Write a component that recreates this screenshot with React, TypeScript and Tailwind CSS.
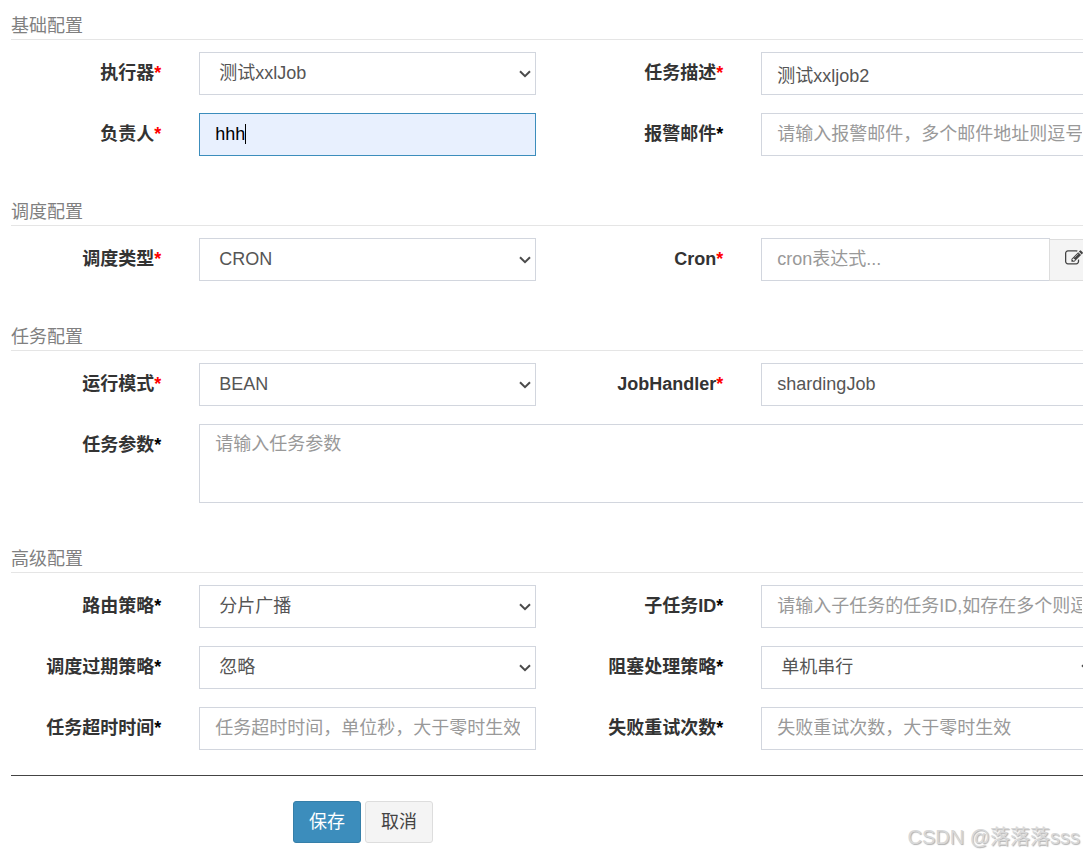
import React from 'react';

const control =
  'block h-[43px] w-full rounded-none border border-[#d2d6de] bg-white text-[18px] text-[#555] outline-none placeholder:text-[#999] placeholder:opacity-100';

function Section({ title, children }: { title: string; children: React.ReactNode }) {
  return (
    <section className="pb-[39px] last-of-type:pb-[25px]">
      <h2 className="-mr-[11px] h-[31px] border-b border-[#e5e5e5] pt-1 text-[18px] leading-[27px] text-[#808080]">{title}</h2>
      <div className="-mr-[45px] -ml-[18px] grid grid-cols-[minmax(0,1fr)_minmax(0,2fr)_minmax(0,1fr)_minmax(0,2fr)] gap-y-[18px] pt-3">
        {children}
      </div>
    </section>
  );
}

function Label({ id, text, required }: { id: string; text: string; required?: boolean }) {
  return (
    <label htmlFor={id} className="pt-[9px] pr-[19px] text-right text-[18px] leading-[25px] font-bold whitespace-nowrap text-[#333]">
      {text}
      <span className={required ? 'text-[#f00]' : 'text-black'}>*</span>
    </label>
  );
}

type FieldProps = { id: string; label: string; required?: boolean };

function SelectField({ id, label, required, option }: FieldProps & { option: string }) {
  return (
    <>
      <Label id={id} text={label} required={required} />
      <div className="px-[19px]">
        <div className="relative">
          <select id={id} className={`${control} appearance-none pr-6 pl-[19px]`}>
            <option>{option}</option>
          </select>
          <svg className="pointer-events-none absolute top-[18px] right-[5px] h-2 w-3" viewBox="0 0 12 8" fill="none" stroke="#4b4b4b" strokeWidth="2">
            <path d="M1 1.2 6 6.2 11 1.2" />
          </svg>
        </div>
      </div>
    </>
  );
}

function TextField({ id, label, required, value, placeholder }: FieldProps & { value?: string; placeholder?: string }) {
  return (
    <>
      <Label id={id} text={label} required={required} />
      <div className="px-[19px]">
        <input id={id} type="text" defaultValue={value} placeholder={placeholder} className={`${control} px-[15px]`} />
      </div>
    </>
  );
}

export default function App() {
  return (
    <main className="relative min-h-screen overflow-hidden bg-white px-[11px] pt-[9px] font-['Liberation_Sans','Noto_Sans_CJK_SC',sans-serif]">
      <form onSubmit={(e) => e.preventDefault()}>
        <Section title="基础配置">
          <SelectField id="group" label="执行器" required option="测试xxlJob" />
          <TextField id="desc" label="任务描述" required value="测试xxljob2" />
          <Label id="author" text="负责人" required />
          <div className="px-[19px]">
            <div className="relative">
              <input
                id="author"
                type="text"
                defaultValue="hhh"
                className="block h-[43px] w-full border border-[#3c8dbc] bg-[#e8f0fe] px-[15px] text-[18px] text-black outline-none"
              />
              <span className="pointer-events-none absolute top-[11px] left-[46px] h-5 w-px bg-black" />
            </div>
          </div>
          <TextField id="email" label="报警邮件" placeholder="请输入报警邮件，多个邮件地址则逗号分隔" />
        </Section>

        <Section title="调度配置">
          <SelectField id="schedule" label="调度类型" required option="CRON" />
          <Label id="cron" text="Cron" required />
          <div className="flex px-[19px]">
            <input id="cron" type="text" placeholder="cron表达式..." className={`${control} min-w-0 flex-1 px-[15px]`} />
            <button type="button" aria-label="Cron" className="mt-px -ml-px flex h-[42px] w-[49px] shrink-0 items-center border border-[#ddd] bg-[#f4f4f4] px-[15px] pb-1">
              <svg className="h-[18px] w-[18px] shrink-0" viewBox="0 0 1792 1792" fill="#444">
                <path d="M888 1184l116-116-152-152-116 116v56h96v96h56zm440-720q-16-16-33 1l-350 350q-17 17-1 33t33-1l350-350q17-17 1-33zm80 594v190q0 119-84.5 203.5t-203.5 84.5h-832q-119 0-203.5-84.5t-84.5-203.5v-832q0-119 84.5-203.5t203.5-84.5h832q63 0 117 25 15 7 18 23 3 17-9 29l-49 49q-14 14-32 8-23-6-45-6h-832q-66 0-113 47t-47 113v832q0 66 47 113t113 47h832q66 0 113-47t47-113v-126q0-13 9-22l64-64q15-15 35-7t20 29zm-96-738l288 288-672 672h-288v-288zm444 132l-92 92-288-288 92-92q28-28 68-28t68 28l152 152q28 28 28 68t-28 68z" />
              </svg>
            </button>
          </div>
        </Section>

        <Section title="任务配置">
          <SelectField id="mode" label="运行模式" required option="BEAN" />
          <TextField id="handler" label="JobHandler" required value="shardingJob" />
          <Label id="param" text="任务参数" />
          <div className="col-span-3 px-[19px]">
            <textarea
              id="param"
              placeholder="请输入任务参数"
              className="block h-[79px] w-full resize-none border border-[#d2d6de] px-[15px] py-[7px] text-[18px] leading-[25px] text-[#555] outline-none placeholder:text-[#999] placeholder:opacity-100"
            />
          </div>
        </Section>

        <Section title="高级配置">
          <SelectField id="route" label="路由策略" option="分片广播" />
          <TextField id="child" label="子任务ID" placeholder="请输入子任务的任务ID,如存在多个则逗号分隔" />
          <SelectField id="misfire" label="调度过期策略" option="忽略" />
          <SelectField id="block" label="阻塞处理策略" option="单机串行" />
          <TextField id="timeout" label="任务超时时间" placeholder="任务超时时间，单位秒，大于零时生效" />
          <TextField id="retry" label="失败重试次数" placeholder="失败重试次数，大于零时生效" />
        </Section>

        <hr className="-mr-[11px] border-t border-[#444]" />
        <div className="-mr-[45px] -ml-[18px] pt-[25px]">
          <div className="ml-[25%] flex gap-1 px-[19px] pb-[11px]">
            <button type="submit" className="h-[42px] rounded-[3px] border border-[#367fa9] bg-[#3c8dbc] px-[15px] text-[18px] leading-[25px] text-white">
              保存
            </button>
            <button type="button" className="h-[42px] rounded-[3px] border border-[#ddd] bg-[#f4f4f4] px-[15px] text-[18px] leading-[25px] text-[#444]">
              取消
            </button>
          </div>
        </div>
      </form>
      <div className="pointer-events-none absolute right-[3px] bottom-1 text-[20px] leading-[26px] text-[#d8d8d8] [text-shadow:1px_1px_1px_#b0b0b0]">
        CSDN @落落落sss
      </div>
    </main>
  );
}
